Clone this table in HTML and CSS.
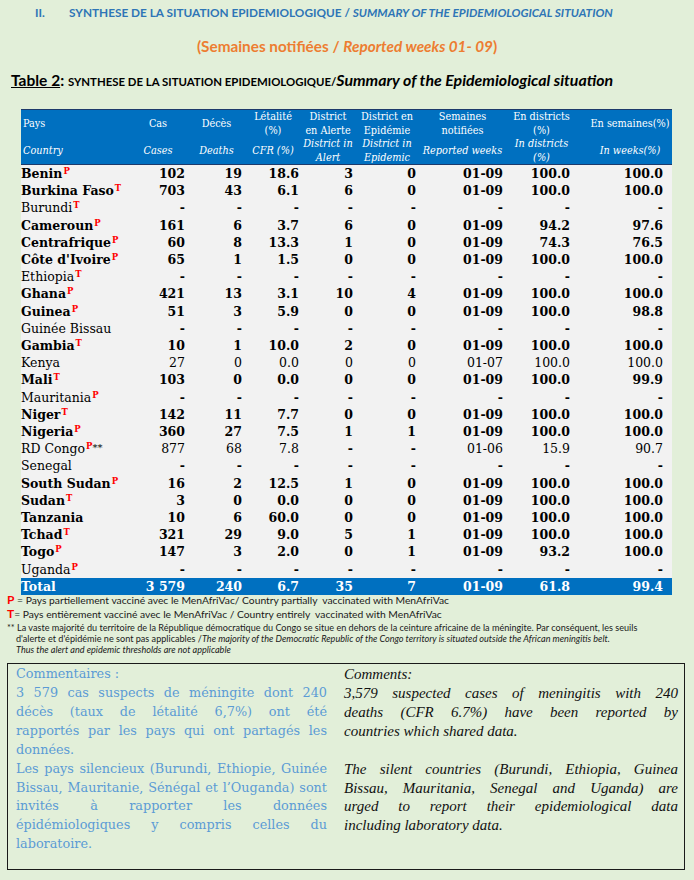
FILE: index.html
```html
<!DOCTYPE html>
<html lang="fr">
<head>
<meta charset="utf-8">
<title>Synthèse de la situation épidémiologique</title>
<link rel="stylesheet" href="styles.css">
</head>
<body>
<div class="page">
  <h2 class="sec"><span class="num">II.</span><span>SYNTHESE DE LA SITUATION EPIDEMIOLOGIQUE / <i>SUMMARY OF THE EPIDEMIOLOGICAL SITUATION</i></span></h2>
  <p class="weeks">(Semaines notifiées / <i>Reported weeks 01- 09</i>)</p>
  <p class="caption"><span class="tlabel">Table 2</span>: <span class="caps">SYNTHESE DE LA SITUATION EPIDEMIOLOGIQUE/</span><i>Summary of the Epidemiological situation</i></p>

  <table class="epi">
    <colgroup>
      <col class="c1"><col class="c2"><col class="c3"><col class="c4"><col class="c5"><col class="c6"><col class="c7"><col class="c8"><col class="c9">
    </colgroup>
    <thead>
      <tr>
        <th class="l">Pays</th><th>Cas</th><th>Décès</th><th>Létalité<br>(%)</th><th>District<br>en Alerte</th><th>District en<br>Epidémie</th><th>Semaines<br>notifiées</th><th>En districts<br>(%)</th><th class="last">En semaines(%)</th>
      </tr>
      <tr>
        <th class="l">Country</th><th>Cases</th><th>Deaths</th><th>CFR (%)</th><th>District in<br>Alert</th><th>District in<br>Epidemic</th><th>Reported weeks</th><th>In districts<br>(%)</th><th class="last">In weeks(%)</th>
      </tr>
    </thead>
    <tbody>
      <tr class="b"><td>Benin<sup class="v">P</sup></td><td>102</td><td>19</td><td>18.6</td><td>3</td><td>0</td><td>01-09</td><td>100.0</td><td>100.0</td></tr>
      <tr class="b"><td>Burkina Faso<sup class="v">T</sup></td><td>703</td><td>43</td><td>6.1</td><td>6</td><td>0</td><td>01-09</td><td>100.0</td><td>100.0</td></tr>
      <tr><td>Burundi<sup class="v">T</sup></td><td class="x">-</td><td class="x">-</td><td class="x">-</td><td class="x">-</td><td class="x">-</td><td class="x">-</td><td class="x">-</td><td class="x">-</td></tr>
      <tr class="b"><td>Cameroun<sup class="v">P</sup></td><td>161</td><td>6</td><td>3.7</td><td>6</td><td>0</td><td>01-09</td><td>94.2</td><td>97.6</td></tr>
      <tr class="b"><td>Centrafrique<sup class="v">P</sup></td><td>60</td><td>8</td><td>13.3</td><td>1</td><td>0</td><td>01-09</td><td>74.3</td><td>76.5</td></tr>
      <tr class="b"><td>Côte d'Ivoire<sup class="v">P</sup></td><td>65</td><td>1</td><td>1.5</td><td>0</td><td>0</td><td>01-09</td><td>100.0</td><td>100.0</td></tr>
      <tr><td>Ethiopia<sup class="v">T</sup></td><td class="x">-</td><td class="x">-</td><td class="x">-</td><td class="x">-</td><td class="x">-</td><td class="x">-</td><td class="x">-</td><td class="x">-</td></tr>
      <tr class="b"><td>Ghana<sup class="v">P</sup></td><td>421</td><td>13</td><td>3.1</td><td>10</td><td>4</td><td>01-09</td><td>100.0</td><td>100.0</td></tr>
      <tr class="b"><td>Guinea<sup class="v">P</sup></td><td>51</td><td>3</td><td>5.9</td><td>0</td><td>0</td><td>01-09</td><td>100.0</td><td>98.8</td></tr>
      <tr><td>Guinée Bissau</td><td class="x">-</td><td class="x">-</td><td class="x">-</td><td class="x">-</td><td class="x">-</td><td class="x">-</td><td class="x">-</td><td class="x">-</td></tr>
      <tr class="b"><td>Gambia<sup class="v">T</sup></td><td>10</td><td>1</td><td>10.0</td><td>2</td><td>0</td><td>01-09</td><td>100.0</td><td>100.0</td></tr>
      <tr><td>Kenya</td><td>27</td><td>0</td><td>0.0</td><td>0</td><td>0</td><td>01-07</td><td>100.0</td><td>100.0</td></tr>
      <tr class="b"><td>Mali<sup class="v">T</sup></td><td>103</td><td>0</td><td>0.0</td><td>0</td><td>0</td><td>01-09</td><td>100.0</td><td>99.9</td></tr>
      <tr><td>Mauritania<sup class="v">P</sup></td><td class="x">-</td><td class="x">-</td><td class="x">-</td><td class="x">-</td><td class="x">-</td><td class="x">-</td><td class="x">-</td><td class="x">-</td></tr>
      <tr class="b"><td>Niger<sup class="v">T</sup></td><td>142</td><td>11</td><td>7.7</td><td>0</td><td>0</td><td>01-09</td><td>100.0</td><td>100.0</td></tr>
      <tr class="b"><td>Nigeria<sup class="v">P</sup></td><td>360</td><td>27</td><td>7.5</td><td>1</td><td>1</td><td>01-09</td><td>100.0</td><td>100.0</td></tr>
      <tr><td>RD Congo<sup class="v">P</sup><sup class="st">**</sup></td><td>877</td><td>68</td><td>7.8</td><td class="x">-</td><td class="x">-</td><td>01-06</td><td>15.9</td><td>90.7</td></tr>
      <tr><td>Senegal</td><td class="x">-</td><td class="x">-</td><td class="x">-</td><td class="x">-</td><td class="x">-</td><td class="x">-</td><td class="x">-</td><td class="x">-</td></tr>
      <tr class="b"><td>South Sudan<sup class="v">P</sup></td><td>16</td><td>2</td><td>12.5</td><td>1</td><td>0</td><td>01-09</td><td>100.0</td><td>100.0</td></tr>
      <tr class="b"><td>Sudan<sup class="v">T</sup></td><td>3</td><td>0</td><td>0.0</td><td>0</td><td>0</td><td>01-09</td><td>100.0</td><td>100.0</td></tr>
      <tr class="b"><td>Tanzania</td><td>10</td><td>6</td><td>60.0</td><td>0</td><td>0</td><td>01-09</td><td>100.0</td><td>100.0</td></tr>
      <tr class="b"><td>Tchad<sup class="v">T</sup></td><td>321</td><td>29</td><td>9.0</td><td>5</td><td>1</td><td>01-09</td><td>100.0</td><td>100.0</td></tr>
      <tr class="b"><td>Togo<sup class="v">P</sup></td><td>147</td><td>3</td><td>2.0</td><td>0</td><td>1</td><td>01-09</td><td>93.2</td><td>100.0</td></tr>
      <tr><td>Uganda<sup class="v">P</sup></td><td class="x">-</td><td class="x">-</td><td class="x">-</td><td class="x">-</td><td class="x">-</td><td class="x">-</td><td class="x">-</td><td class="x">-</td></tr>
    </tbody>
    <tfoot>
      <tr><td>Total</td><td>3 579</td><td>240</td><td>6.7</td><td>35</td><td>7</td><td>01-09</td><td>61.8</td><td>99.4</td></tr>
    </tfoot>
  </table>

  <div class="notes">
    <p class="key"><span class="red">P</span> = Pays partiellement vacciné avec le MenAfriVac/ Country partially&nbsp; vaccinated with MenAfriVac</p>
    <p class="key"><span class="red">T</span>= Pays entièrement vacciné avec le MenAfriVac / Country entirely&nbsp; vaccinated with MenAfriVac</p>
    <p class="drc">** La vaste majorité du territoire de la République démocratique du Congo se situe en dehors de la ceinture africaine de la méningite. Par conséquent, les seuils<br>d'alerte et d'épidémie ne sont pas applicables /<i>The majority of the Democratic Republic of the Congo territory is situated outside the African meningitis belt.</i><br><i>Thus the alert and epidemic thresholds are not applicable</i></p>
  </div>

  <div class="comments">
    <div class="fr">
      <div>Commentaires :</div>
      <div class="j">3 579 cas suspects de méningite dont 240</div>
      <div class="j">décès (taux de létalité 6,7%) ont été</div>
      <div class="j">rapportés par les pays qui ont partagés les</div>
      <div>données.</div>
      <div class="j">Les pays silencieux (Burundi, Ethiopie, Guinée</div>
      <div class="j">Bissau, Mauritanie, Sénégal et l’Ouganda) sont</div>
      <div class="j">invités à rapporter les données</div>
      <div class="j">épidémiologiques y compris celles du</div>
      <div>laboratoire.</div>
    </div>
    <div class="en">
      <div>Comments:</div>
      <div class="j">3,579 suspected cases of meningitis with 240</div>
      <div class="j">deaths (CFR 6.7%) have been reported by</div>
      <div>countries which shared data.</div>
      <div class="blank"></div>
      <div class="j">The silent countries (Burundi, Ethiopia, Guinea</div>
      <div class="j">Bissau, Mauritania, Senegal and Uganda) are</div>
      <div class="j">urged to report their epidemiological data</div>
      <div>including laboratory data.</div>
    </div>
  </div>
</div>
</body>
</html>
```
FILE: styles.css
```css
body {
  margin: 0;
  background: #e2efd9;
}

.page {
  width: 694px;
  min-height: 880px;
  padding-top: 5px;
  box-sizing: border-box;
}

.sec {
  margin: 0;
  padding-left: 35px;
  display: flex;
  font: bold 11.8px/16px Lato, sans-serif;
  color: #2e75b6;
}

.sec .num {
  width: 34px;
}

.weeks {
  margin: 16px 0 0;
  text-align: center;
  font: bold 15.3px/18px Lato, sans-serif;
  color: #ed7d31;
}

.caption {
  margin: 16px 0 0 11px;
  font: bold 15.5px/18px Lato, sans-serif;
  color: #000;
}

.caption .tlabel {
  text-decoration: underline;
}

.caption .caps {
  font-size: 11.4px;
}

.caption i {
  font-size: 15.9px;
}

/* ---------- table ---------- */
.epi {
  margin: 18px 0 0 21px;
  width: 651px;
  border-collapse: collapse;
  table-layout: fixed;
  font-family: "DejaVu Serif", serif;
  color: #000;
}

.c1 { width: 107px; }
.c2 { width: 60px; }
.c3 { width: 57px; }
.c4 { width: 56px; }
.c5 { width: 54px; }
.c6 { width: 64px; }
.c7 { width: 87px; }
.c8 { width: 71px; }
.c9 { width: 95px; }

.epi th {
  background: #0070c0;
  color: #fff;
  font-family: "DejaVu Serif Condensed", "DejaVu Serif", serif;
  font-weight: normal;
  font-size: 10.8px;
  line-height: 13.5px;
  height: 27px;
  padding: 0;
  text-align: center;
  vertical-align: middle;
}

.epi thead tr:first-child th {
  border-top: 1px solid #1d3a6b;
}

.epi thead tr:last-child th {
  font-style: italic;
  border-bottom: 1px solid #1d3a6b;
}

.epi th.l {
  text-align: left;
  padding-left: 2px;
}

.epi th.last {
  padding-left: 11px;
}

.epi td {
  background: #f2f2f2;
  font-size: 12.5px;
  line-height: 17.2px;
  height: 17.2px;
  padding: 0;
  text-align: right;
  white-space: nowrap;
}

.epi td:first-child { text-align: left; }
.epi td:nth-child(2) { padding-right: 3px; }
.epi td:nth-child(3) { padding-right: 3px; }
.epi td:nth-child(4) { padding-right: 2px; }
.epi td:nth-child(5) { padding-right: 2px; }
.epi td:nth-child(6) { padding-right: 3px; }
.epi td:nth-child(7) { padding-right: 3px; }
.epi td:nth-child(8) { padding-right: 7px; }
.epi td:nth-child(9) { padding-right: 9px; }

.epi tr.b td,
.epi td.x {
  font-weight: bold;
}

.epi tfoot td {
  background: #0070c0;
  color: #fff;
  font-weight: bold;
}

.v {
  color: #ff0000;
  font-size: 8.5px;
  font-weight: bold;
  line-height: 0;
  vertical-align: 4px;
  margin-left: 1px;
}

.st {
  font-size: 10px;
  line-height: 0;
  vertical-align: 2px;
}

/* ---------- notes ---------- */
.notes {
  margin-top: -2px;
  padding-left: 7px;
  font-family: Lato, sans-serif;
  color: #1a1a1a;
}

.notes p {
  margin: 0;
}

.notes .key {
  font-size: 10.3px;
  line-height: 13px;
}

.red {
  color: #ff0000;
  font-weight: bold;
  font-size: 12px;
}

.notes .drc {
  margin-top: 1px;
  padding-left: 9px;
  text-indent: -9px;
  font-size: 9.1px;
  line-height: 11px;
}

/* ---------- comments ---------- */
.comments {
  margin: 8px 0 0 7px;
  width: 678px;
  height: 207px;
  box-sizing: border-box;
  border: 1px solid #1a1a1a;
  padding: 1px 6px 0 8px;
  display: grid;
  grid-template-columns: 311px 334px;
  column-gap: 17px;
}

.fr {
  font: 12.8px/18.9px "DejaVu Serif", serif;
  color: #5b9bd5;
}

.en {
  font: italic 15px/18.9px "Liberation Serif", serif;
  color: #111;
}

.j {
  text-align: justify;
  text-align-last: justify;
}

.blank {
  height: 18.9px;
}
```
